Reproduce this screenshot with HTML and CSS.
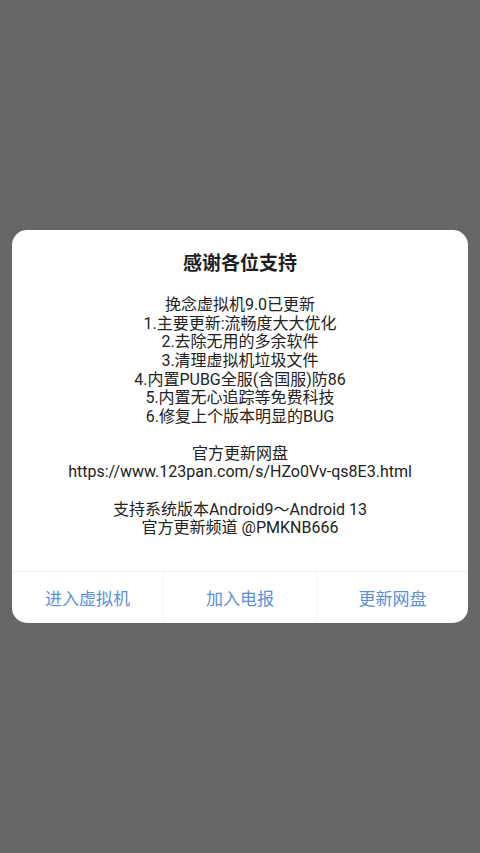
FILE: index.html
```html
<!DOCTYPE html>
<html lang="zh-CN">
<head>
<meta charset="utf-8">
<title>感谢各位支持</title>
<link rel="stylesheet" href="styles.css">
</head>
<body>
<div class="screen">
  <div class="dialog">
    <h1 class="title">感谢各位支持</h1>
    <div class="message">
      <p class="group">
        <span class="line">挽念虚拟机9.0已更新</span>
        <span class="line">1.主要更新:流畅度大大优化</span>
        <span class="line">2.去除无用的多余软件</span>
        <span class="line">3.清理虚拟机垃圾文件</span>
        <span class="line">4.内置PUBG全服(含国服)防86</span>
        <span class="line">5.内置无心追踪等免费科技</span>
        <span class="line">6.修复上个版本明显的BUG</span>
      </p>
      <p class="group">
        <span class="line">官方更新网盘</span>
        <span class="line">https://www.123pan.com/s/HZo0Vv-qs8E3.html</span>
      </p>
      <p class="group">
        <span class="line">支持系统版本Android9～Android 13</span>
        <span class="line">官方更新频道 @PMKNB666</span>
      </p>
    </div>
    <div class="actions">
      <button class="action">进入虚拟机</button>
      <button class="action">加入电报</button>
      <button class="action">更新网盘</button>
    </div>
  </div>
</div>
</body>
</html>
```
FILE: styles.css
```css
html, body {
  margin: 0;
  padding: 0;
}
body {
  background: #676767;
  font-family: Roboto, "Noto Sans CJK SC", sans-serif;
}
.screen {
  min-height: 853px;
  display: flex;
  align-items: center;
  justify-content: center;
  padding: 0 12px;
  box-sizing: border-box;
}
.dialog {
  width: 456px;
  background: #ffffff;
  border-radius: 15px;
  overflow: hidden;
  display: flex;
  flex-direction: column;
}
.title {
  margin: 0;
  padding-top: 22px;
  font-size: 19px;
  line-height: 24px;
  font-weight: bold;
  color: #1e1e1e;
  text-align: center;
}
.message {
  padding-top: 20px;
  padding-bottom: 33px;
  color: #222222;
  font-size: 16px;
  line-height: 18.6px;
  text-align: center;
}
.group {
  margin: 0;
}
.group + .group {
  margin-top: 18.6px;
}
.line {
  display: block;
}
.actions {
  display: grid;
  grid-template-columns: 151px 1fr 152px;
  border-top: 1px solid #f1f1f1;
  height: 51px;
}
.action {
  border: none;
  background: transparent;
  font-family: Roboto, "Noto Sans CJK SC", sans-serif;
  font-size: 17px;
  color: #5b8fd8;
  padding: 0;
  margin: 0;
}
.action + .action {
  border-left: 1px solid #f3f3f3;
}
```
